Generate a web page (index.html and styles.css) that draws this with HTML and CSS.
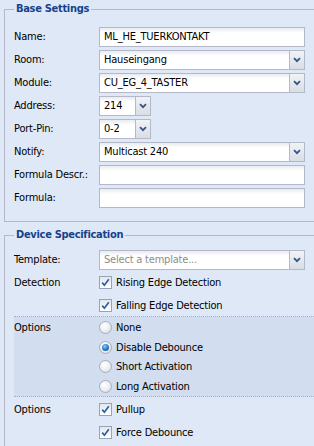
FILE: index.html
```html
<!DOCTYPE html>
<html>
<head>
<meta charset="utf-8">
<link rel="stylesheet" href="styles.css">
</head>
<body>
<fieldset class="fs fs-base">
  <legend>Base Settings</legend>
  <div class="row"><span class="lbl">Name:</span><div class="field wide"><span class="val">ML_HE_TUERKONTAKT</span></div></div>
  <div class="row"><span class="lbl">Room:</span><div class="field wide combo"><span class="val">Hauseingang</span><span class="trig"><svg width="8" height="6" viewBox="0 0 8 6"><path d="M1 1.2 L4 4.2 L7 1.2" fill="none" stroke="#34558a" stroke-width="1.8"/></svg></span></div></div>
  <div class="row"><span class="lbl">Module:</span><div class="field wide combo"><span class="val">CU_EG_4_TASTER</span><span class="trig"><svg width="8" height="6" viewBox="0 0 8 6"><path d="M1 1.2 L4 4.2 L7 1.2" fill="none" stroke="#34558a" stroke-width="1.8"/></svg></span></div></div>
  <div class="row"><span class="lbl">Address:</span><div class="field small combo"><span class="val">214</span><span class="trig"><svg width="8" height="6" viewBox="0 0 8 6"><path d="M1 1.2 L4 4.2 L7 1.2" fill="none" stroke="#34558a" stroke-width="1.8"/></svg></span></div></div>
  <div class="row"><span class="lbl">Port-Pin:</span><div class="field small combo"><span class="val">0-2</span><span class="trig"><svg width="8" height="6" viewBox="0 0 8 6"><path d="M1 1.2 L4 4.2 L7 1.2" fill="none" stroke="#34558a" stroke-width="1.8"/></svg></span></div></div>
  <div class="row"><span class="lbl">Notify:</span><div class="field wide combo"><span class="val">Multicast 240</span><span class="trig"><svg width="8" height="6" viewBox="0 0 8 6"><path d="M1 1.2 L4 4.2 L7 1.2" fill="none" stroke="#34558a" stroke-width="1.8"/></svg></span></div></div>
  <div class="row"><span class="lbl">Formula Descr.:</span><div class="field wide"><span class="val"></span></div></div>
  <div class="row"><span class="lbl">Formula:</span><div class="field wide"><span class="val"></span></div></div>
</fieldset>

<fieldset class="fs fs-dev">
  <legend>Device Specification</legend>
  <div class="row first"><span class="lbl">Template:</span><div class="field wide combo"><span class="val placeholder">Select a template...</span><span class="trig"><svg width="8" height="6" viewBox="0 0 8 6"><path d="M1 1.2 L4 4.2 L7 1.2" fill="none" stroke="#34558a" stroke-width="1.8"/></svg></span></div></div>

  <div class="group">
    <span class="lbl">Detection</span>
    <div class="opts">
      <div class="opt"><span class="cb"><svg width="11" height="11" viewBox="0 0 11 11"><path d="M2.2 5.6 L4.4 8.2 L8.8 2.2" fill="none" stroke="#2c5ea6" stroke-width="1.7"/></svg></span>Rising Edge Detection</div>
      <div class="opt"><span class="cb"><svg width="11" height="11" viewBox="0 0 11 11"><path d="M2.2 5.6 L4.4 8.2 L8.8 2.2" fill="none" stroke="#2c5ea6" stroke-width="1.7"/></svg></span>Falling Edge Detection</div>
    </div>
  </div>

  <div class="group band">
    <span class="lbl">Options</span>
    <div class="opts">
      <div class="opt"><span class="rd"></span>None</div>
      <div class="opt"><span class="rd on"></span>Disable Debounce</div>
      <div class="opt"><span class="rd"></span>Short Activation</div>
      <div class="opt"><span class="rd"></span>Long Activation</div>
    </div>
  </div>

  <div class="group after">
    <span class="lbl">Options</span>
    <div class="opts">
      <div class="opt"><span class="cb"><svg width="11" height="11" viewBox="0 0 11 11"><path d="M2.2 5.6 L4.4 8.2 L8.8 2.2" fill="none" stroke="#2c5ea6" stroke-width="1.7"/></svg></span>Pullup</div>
      <div class="opt"><span class="cb"><svg width="11" height="11" viewBox="0 0 11 11"><path d="M2.2 5.6 L4.4 8.2 L8.8 2.2" fill="none" stroke="#2c5ea6" stroke-width="1.7"/></svg></span>Force Debounce</div>
    </div>
  </div>
</fieldset>
</body>
</html>
```
FILE: styles.css
```css
html, body {
  margin: 0;
  padding: 0;
}
body {
  background: #dfe8f6;
  font-family: "DejaVu Sans Condensed", "DejaVu Sans", sans-serif;
  font-size: 11px;
  letter-spacing: -0.2px;
  color: #000;
  width: 314px;
  height: 446px;
  overflow: hidden;
}
.fs {
  margin: 2px 0 0 4px;
  border: 1px solid #b5b8c8;
  border-right: none;
  padding: 11px 0 10px 9px;
  min-width: 0;
}
.fs legend {
  padding: 0 2px;
  color: #15428b;
  font-weight: bold;
  letter-spacing: -0.3px;
  line-height: 14px;
}
.fs-dev {
  margin-top: 6px;
  padding-top: 8px;
  padding-bottom: 20px;
}
.row {
  display: flex;
  align-items: center;
  height: 20px;
  margin-bottom: 3px;
}
.row.first {
  margin-bottom: 1px;
}
.lbl {
  width: 85px;
  flex: none;
  line-height: 20px;
}
.field {
  box-sizing: border-box;
  height: 20px;
  border: 1px solid #b5b8c8;
  background: linear-gradient(#e8ebef, #ffffff 5px);
  display: flex;
  align-items: stretch;
}
.field.wide { width: 206px; }
.field.small { width: 52px; }
.val {
  flex: 1;
  padding: 0 4px;
  line-height: 18px;
  white-space: nowrap;
  overflow: hidden;
}
.placeholder { color: #8c8c8c; }
.trig {
  width: 14px;
  flex: none;
  border-left: 1px solid #b5b8c8;
  background: linear-gradient(#f1f3f6, #d9dee5);
  display: flex;
  align-items: center;
  justify-content: center;
}
.trig svg { display: block; }
.group {
  display: flex;
  align-items: flex-start;
}
.group .lbl {
  line-height: 23px;
}
.opts {
  display: flex;
  flex-direction: column;
}
.opt {
  display: flex;
  align-items: center;
  height: 23px;
  white-space: nowrap;
}
.cb {
  box-sizing: border-box;
  width: 13px;
  height: 13px;
  border: 1px solid #98a3b4;
  background: linear-gradient(#e3e7ec, #ffffff);
  margin-right: 4px;
  display: flex;
  align-items: center;
  justify-content: center;
  flex: none;
}
.cb svg { display: block; }
.band {
  background: #d2ddef;
  border-top: 1px dotted #a4b2c8;
  border-bottom: 1px dotted #a4b2c8;
  padding-top: 1px;
  margin-top: -1px;
}
.band .lbl { line-height: 19.5px; }
.band .opt { height: 19.5px; }
.rd {
  box-sizing: border-box;
  width: 13px;
  height: 13px;
  border-radius: 50%;
  border: 1px solid #a7aeb9;
  background: radial-gradient(circle at 40% 35%, #ffffff 0, #f1f3f6 40%, #d3d8df 100%);
  margin-right: 4px;
  flex: none;
  position: relative;
}
.rd.on::after {
  content: "";
  position: absolute;
  left: 2px;
  top: 2px;
  width: 7px;
  height: 7px;
  border-radius: 50%;
  background: radial-gradient(circle at 40% 35%, #8cd0ff 0, #2f86d4 45%, #163f7a 100%);
}
.after {
  margin-top: 1px;
}
```
